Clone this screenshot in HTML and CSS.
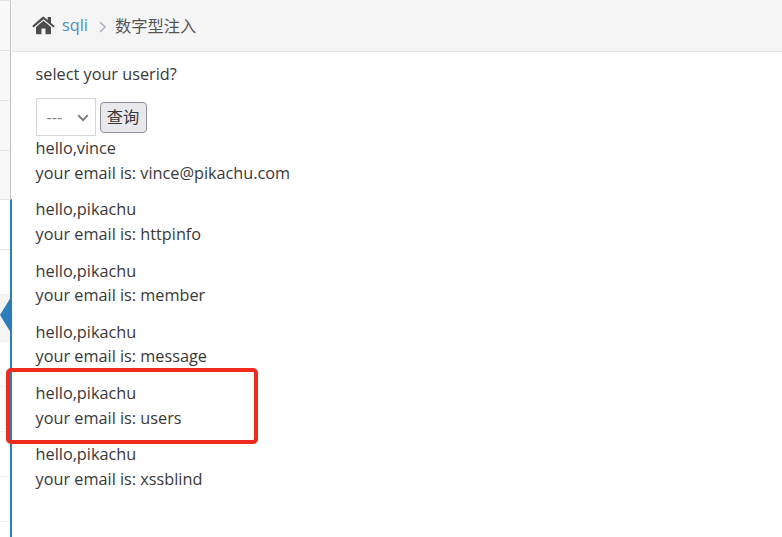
FILE: index.html
```html
<!DOCTYPE html>
<html lang="zh-CN">
<head>
<meta charset="utf-8">
<title>数字型注入</title>
<link rel="stylesheet" href="styles.css">
</head>
<body>
<div class="layout">
  <aside class="sidebar">
    <div class="group"></div>
    <div class="group"></div>
    <div class="group"></div>
    <div class="group last"></div>
    <div class="submenu">
      <div class="item tall"></div>
      <div class="item"></div>
      <div class="item active"><svg class="arrow" viewBox="0 0 11 36"><path d="M11 0V36L0 18Z"/></svg></div>
      <div class="item"></div>
      <div class="item"></div>
      <div class="item"></div>
      <div class="item"></div>
    </div>
  </aside>
  <main class="main">
    <nav class="breadcrumb">
      <svg class="home" viewBox="0 0 23 19"><path d="M11.5 4.7 19 11V17.3Q19 18.3 18 18.3H13.5V12.5H9.5V18.3H5Q4 18.3 4 17.3V11Z"/><path d="M11.5.6 15.7 4.1V1H19V6.9L22.8 10.1 21.5 11.5 11.5 3.2 1.5 11.5.2 10.1 10.3 1Q11.5 0 12.7 1Z"/></svg>
      <a class="link">sqli</a>
      <svg class="chevron" viewBox="0 0 7 12"><path d="M1 1 6 6 1 11"/></svg>
      <span class="current">数字型注入</span>
    </nav>
    <section class="content">
      <p class="title">select your userid?</p>
      <form class="form">
        <div class="select"><span class="value">---</span><svg class="caret" viewBox="0 0 12 8"><path d="M1.2 1.2 6 6.2 10.8 1.2"/></svg></div>
        <button class="submit" type="button">查询</button>
      </form>
      <p>hello,vince<br>your email is: vince@pikachu.com</p>
      <p>hello,pikachu<br>your email is: httpinfo</p>
      <p>hello,pikachu<br>your email is: member</p>
      <p>hello,pikachu<br>your email is: message</p>
      <p class="marked">hello,pikachu<br>your email is: users</p>
      <p>hello,pikachu<br>your email is: xssblind</p>
    </section>
  </main>
</div>
</body>
</html>
```
FILE: styles.css
```css
* { box-sizing: border-box; }
body {
  margin: 0;
  background: #fff;
  color: #393939;
  font: 16.25px/24.375px "Open Sans", "Noto Sans CJK SC", sans-serif;
}
.layout { display: flex; height: 537px; overflow: hidden; }
.sidebar { width: 12px; flex: none; }
.group {
  height: 50px;
  background: #f8f8f8;
  border-top: 1px solid #e3e3e3;
  border-right: 1px solid #c0c0c0;
  margin-right: 1px;
}
.last { height: 49px; }
.submenu { height: 338px; border-right: 2px solid #2b7dbc; border-top: 1px solid #e5e5e5; }
.item { height: 45px; border-bottom: 1px solid #f0f0f0; }
.tall { height: 50px; border-color: #e3e3e3; }
.active { position: relative; height: 47px; background: #f5f5f5; }
.arrow { position: absolute; top: 2px; left: 0; width: 11px; height: 36px; fill: #2b7dbc; }
.main { flex: 1; min-width: 0; }
.breadcrumb {
  display: flex;
  align-items: center;
  height: 52px;
  padding-left: 20px;
  background: #f5f5f5;
  border-bottom: 1px solid #e5e5e5;
}
.home { width: 23px; height: 19px; margin-right: 7px; fill: #4c4c4c; }
.link { color: #4c8fbd; }
.chevron { width: 7px; height: 12px; margin: 2px 9px 0 11px; fill: none; stroke: #b2b6bf; stroke-width: 1.6; }
.current { color: #555; position: relative; top: 1px; }
.content { padding: 10px 23.6px 0; }
p { margin: 0 0 12.5px; }
.title { margin-bottom: 11.75px; }
.form { display: flex; align-items: center; gap: 4px; margin: 0; }
.select {
  display: flex;
  align-items: center;
  justify-content: space-between;
  width: 60px;
  height: 38px;
  padding: 0 6px 0 10px;
  border: 1px solid #d5d5d5;
  color: #858585;
}
.caret { width: 12px; height: 8px; margin-top: 1px; fill: none; stroke: #777; stroke-width: 1.8; }
.submit {
  width: 47px;
  height: 31px;
  margin-top: 1px;
  padding: 0 0 1px;
  border: 1px solid #8f8f9d;
  border-radius: 4px;
  background: #e9e9ed;
  color: #393939;
  font: inherit;
  line-height: 28px;
}
.marked { position: relative; }
.marked::before {
  content: "";
  position: absolute;
  box-sizing: border-box;
  top: -13.4px;
  left: -29.2px;
  width: 252px;
  height: 76px;
  border: 4px solid #f02a1d;
  border-radius: 5px;
}
```
